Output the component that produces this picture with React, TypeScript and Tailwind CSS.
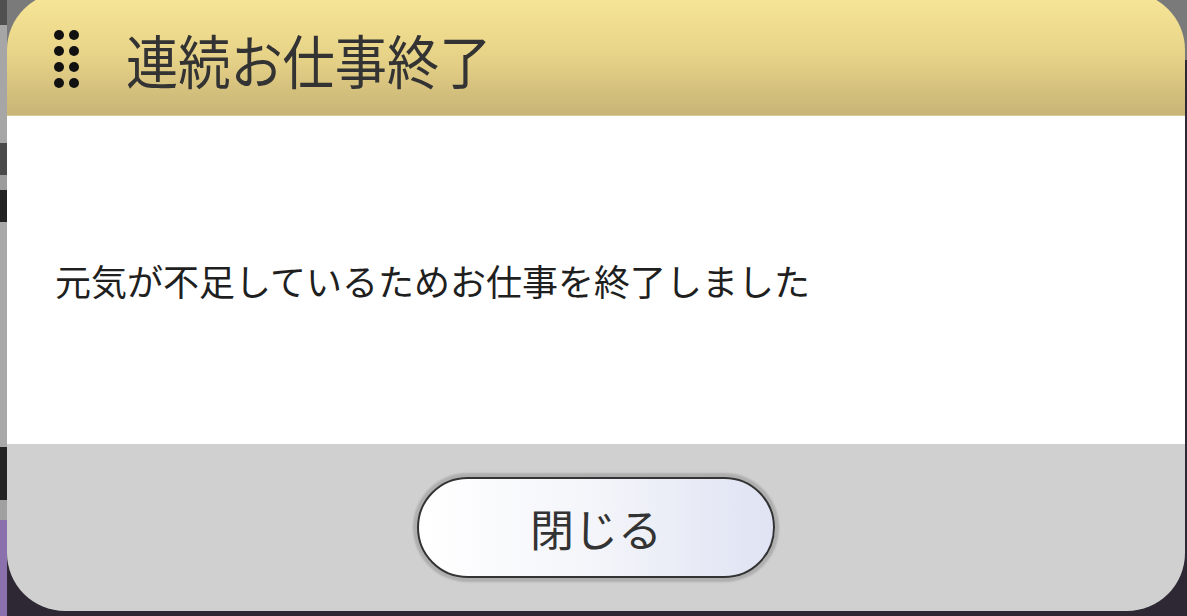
import React from "react";

const jp = { fontFamily: '"Noto Sans CJK JP", "Noto Sans", sans-serif' };

function GripDots() {
  const rows = [0, 1, 2, 3];
  return (
    <div className="grid grid-cols-2 gap-x-[5px] gap-y-[6px]">
      {rows.map((r) => (
        <React.Fragment key={r}>
          <span className="block h-[10px] w-[10px] rounded-full bg-[#111]" />
          <span className="block h-[10px] w-[10px] rounded-full bg-[#111]" />
        </React.Fragment>
      ))}
    </div>
  );
}

export default function App() {
  return (
    <div className="relative h-[616px] w-[1187px] overflow-hidden bg-[#2d2833]" style={jp}>
      {/* scene behind the modal */}
      <div className="flex h-full w-full">
        <div className="flex h-full w-[7px] flex-col">
          <div className="h-[25px] bg-[#505050]" />
          <div className="h-[118px] bg-[#a6a6a6]" />
          <div className="h-[32px] bg-[#4a4a4a]" />
          <div className="h-[15px] bg-[#9c9c9c]" />
          <div className="h-[32px] bg-[#222]" />
          <div className="h-[225px] bg-[#a8a8a8]" />
          <div className="h-[53px] bg-[#232323]" />
          <div className="h-[20px] bg-[#a0a0a0]" />
          <div className="flex-1 bg-[#8a70ad]" />
        </div>
        <div className="flex flex-1 flex-col">
          <div className="h-[60px] bg-[#7a7a7a]" />
          <div className="flex-1 bg-[#2d2833]" />
        </div>
      </div>

      {/* modal */}
      <div className="absolute left-[7px] top-[-8px] flex h-[619px] w-[1178px] flex-col overflow-hidden rounded-[58px]">
        <div className="flex h-[124px] shrink-0 items-center border-b border-[#d6cc98] bg-gradient-to-b from-[#f8e798] via-[#e8d488] to-[#c8b476] pl-[47px] pt-[10px]">
          <GripDots />
          <div className="ml-[47px] origin-left scale-x-[0.9] whitespace-nowrap text-[58px] leading-none text-[#333]">
            連続お仕事終了
          </div>
        </div>
        <div className="flex h-[328px] shrink-0 items-center bg-white pl-[48px]">
          <p className="text-[36px] leading-none text-[#1f1f1f]">元気が不足しているためお仕事を終了しました</p>
        </div>
        <div className="flex flex-1 items-center justify-center bg-[#d0d0d0]">
          <button className="flex h-[101px] w-[358px] items-center justify-center rounded-full border-2 border-[#333] bg-gradient-to-r from-white via-[#f4f5fa] to-[#dfe3f3] text-[44px] leading-none text-[#333] shadow-[0_0_2px_4px_rgba(0,0,0,0.16)]">
            閉じる
          </button>
        </div>
      </div>
    </div>
  );
}
